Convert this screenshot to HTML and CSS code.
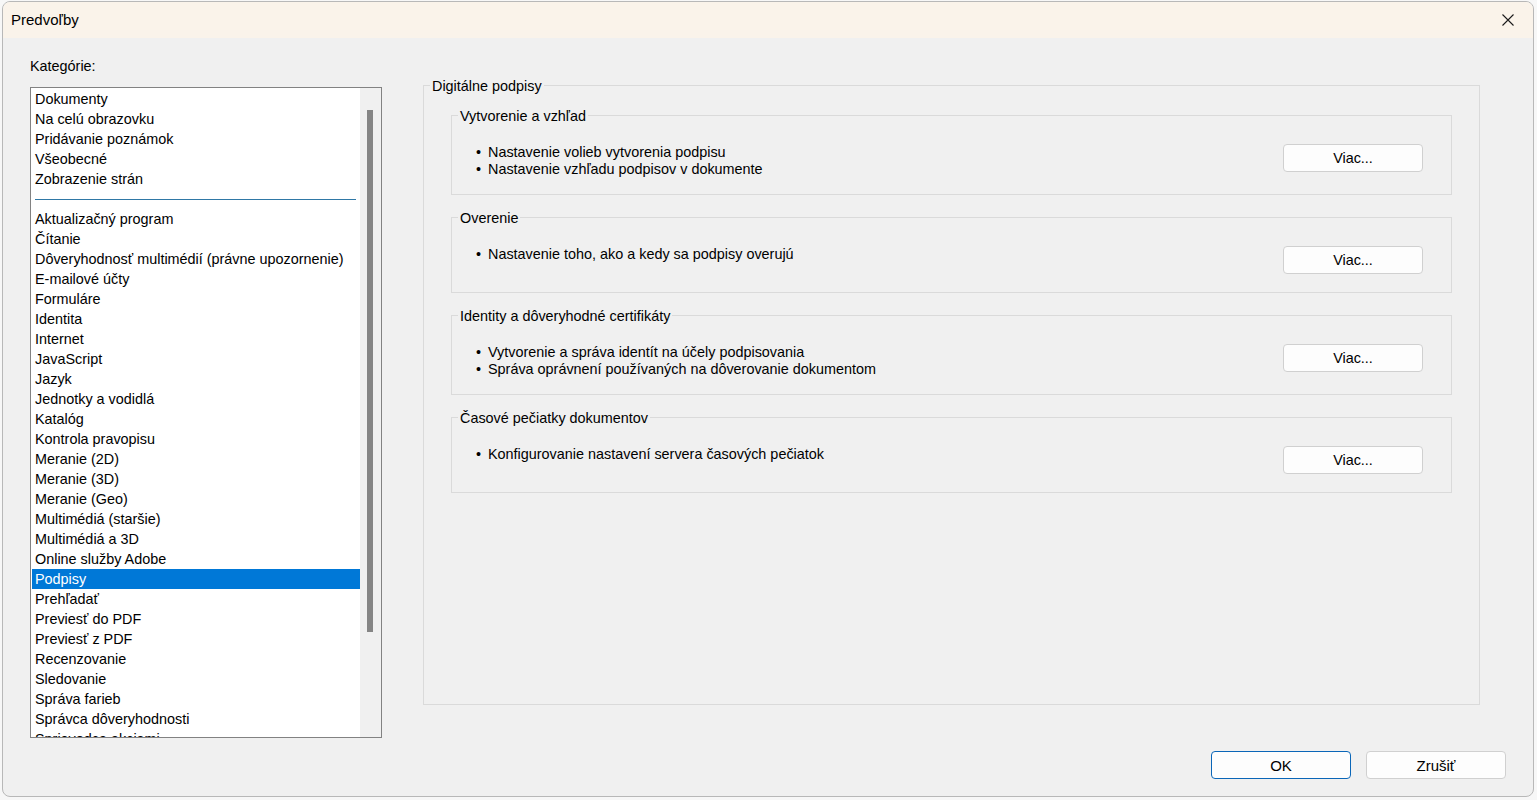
FILE: index.html
```html
<!DOCTYPE html>
<html lang="sk">
<head>
<meta charset="utf-8">
<title>Predvoľby</title>
<link rel="stylesheet" href="styles.css">
</head>
<body>
<div class="window">
  <div class="titlebar">
    <span class="title">Predvoľby</span>
    <span class="close">
      <svg width="12" height="12" viewBox="0 0 12 12"><path d="M0.5 0.5 L11.5 11.5 M11.5 0.5 L0.5 11.5" stroke="#1b1b1b" stroke-width="1.1" fill="none"/></svg>
    </span>
  </div>
  <div class="content">
    <div class="main">
      <div class="left">
        <div class="cat-label">Kategórie:</div>
        <div class="listbox">
          <div class="items">
            <div class="item">Dokumenty</div>
            <div class="item">Na celú obrazovku</div>
            <div class="item">Pridávanie poznámok</div>
            <div class="item">Všeobecné</div>
            <div class="item">Zobrazenie strán</div>
            <div class="sep"><div class="sep-line"></div></div>
            <div class="item">Aktualizačný program</div>
            <div class="item">Čítanie</div>
            <div class="item">Dôveryhodnosť multimédií (právne upozornenie)</div>
            <div class="item">E-mailové účty</div>
            <div class="item">Formuláre</div>
            <div class="item">Identita</div>
            <div class="item">Internet</div>
            <div class="item">JavaScript</div>
            <div class="item">Jazyk</div>
            <div class="item">Jednotky a vodidlá</div>
            <div class="item">Katalóg</div>
            <div class="item">Kontrola pravopisu</div>
            <div class="item">Meranie (2D)</div>
            <div class="item">Meranie (3D)</div>
            <div class="item">Meranie (Geo)</div>
            <div class="item">Multimédiá (staršie)</div>
            <div class="item">Multimédiá a 3D</div>
            <div class="item">Online služby Adobe</div>
            <div class="item selected">Podpisy</div>
            <div class="item">Prehľadať</div>
            <div class="item">Previesť do PDF</div>
            <div class="item">Previesť z PDF</div>
            <div class="item">Recenzovanie</div>
            <div class="item">Sledovanie</div>
            <div class="item">Správa farieb</div>
            <div class="item">Správca dôveryhodnosti</div>
            <div class="item">Sprievodca akciami</div>
          </div>
          <div class="scrolltrack"><div class="thumb"></div></div>
        </div>
      </div>
      <div class="right">
        <div class="panel">
          <div class="glabel">Digitálne podpisy</div>
          <div class="group">
            <div class="glabel">Vytvorenie a vzhľad</div>
            <div class="grow">
              <div class="bullets">
                <div><span class="dot">•</span>Nastavenie volieb vytvorenia podpisu</div>
                <div><span class="dot">•</span>Nastavenie vzhľadu podpisov v dokumente</div>
              </div>
              <button class="btn">Viac...</button>
            </div>
          </div>
          <div class="group">
            <div class="glabel">Overenie</div>
            <div class="grow">
              <div class="bullets">
                <div><span class="dot">•</span>Nastavenie toho, ako a kedy sa podpisy overujú</div>
              </div>
              <button class="btn">Viac...</button>
            </div>
          </div>
          <div class="group">
            <div class="glabel">Identity a dôveryhodné certifikáty</div>
            <div class="grow">
              <div class="bullets">
                <div><span class="dot">•</span>Vytvorenie a správa identít na účely podpisovania</div>
                <div><span class="dot">•</span>Správa oprávnení používaných na dôverovanie dokumentom</div>
              </div>
              <button class="btn">Viac...</button>
            </div>
          </div>
          <div class="group">
            <div class="glabel">Časové pečiatky dokumentov</div>
            <div class="grow">
              <div class="bullets">
                <div><span class="dot">•</span>Konfigurovanie nastavení servera časových pečiatok</div>
              </div>
              <button class="btn">Viac...</button>
            </div>
          </div>
        </div>
      </div>
    </div>
    <div class="footer">
      <button class="btn btn-lg btn-default">OK</button>
      <button class="btn btn-lg">Zrušiť</button>
    </div>
  </div>
</div>
</body>
</html>
```
FILE: styles.css
```css
html, body {
  margin: 0;
  padding: 0;
  background: #f7f7f7;
}
body {
  font-family: "Liberation Sans", Arial, sans-serif;
  font-size: 14.4px;
  color: #000;
}
.window {
  margin: 1px 2px 0 2px;
  width: 1532px;
  height: 796px;
  box-sizing: border-box;
  border: 1px solid #b8b8b8;
  border-radius: 8px;
  background: #f0f0f0;
  display: flex;
  flex-direction: column;
  overflow: hidden;
}
.titlebar {
  height: 36px;
  flex: 0 0 36px;
  background: #faf3ea;
  display: flex;
  align-items: center;
  justify-content: space-between;
  padding: 0 0 0 8px;
}
.title {
  font-size: 15px;
  line-height: 17px;
  margin-top: -1px;
}
.close {
  width: 46px;
  height: 36px;
  display: flex;
  align-items: center;
  justify-content: center;
  margin-right: 2px;
}
.content {
  flex: 1;
  display: flex;
  flex-direction: column;
  padding: 0 27px;
}
.main {
  display: flex;
  align-items: flex-start;
}
.left {
  width: 352px;
  flex: 0 0 352px;
  padding-top: 20px;
}
.cat-label {
  line-height: 17px;
  margin-bottom: 12px;
}
.listbox {
  height: 651px;
  box-sizing: border-box;
  border: 1px solid #828282;
  background: #fff;
  display: flex;
  overflow: hidden;
}
.items {
  flex: 1;
  overflow: hidden;
  padding-top: 1px;
}
.item {
  height: 20px;
  line-height: 20px;
  padding-left: 4px;
  white-space: nowrap;
}
.item.selected {
  background: #0078d7;
  color: #fff;
  margin-left: 1px;
  padding-left: 3px;
}
.sep {
  height: 20px;
  display: flex;
  align-items: center;
  padding: 0 4px 0 4px;
}
.sep-line {
  flex: 1;
  height: 1px;
  background: #2f78a6;
}
.scrolltrack {
  width: 21px;
  flex: 0 0 21px;
  background: #f0f0f0;
  padding-top: 22px;
  box-sizing: border-box;
}
.thumb {
  width: 6px;
  height: 522px;
  margin-left: 7px;
  background: #858585;
}
.right {
  flex: 1;
  margin-left: 41px;
  margin-right: 26px;
  padding-top: 47px;
}
.panel {
  position: relative;
  height: 620px;
  box-sizing: border-box;
  border: 1px solid #dadada;
  padding: 29px 27px 0 27px;
  display: flex;
  flex-direction: column;
  gap: 22px;
}
.group {
  position: relative;
  border: 1px solid #dadada;
}
.glabel {
  position: absolute;
  top: -8px;
  left: 6px;
  padding: 0 2px;
  line-height: 17px;
  background: #f0f0f0;
  white-space: nowrap;
}
.grow {
  display: flex;
  justify-content: space-between;
  align-items: flex-start;
  min-height: 30px;
  padding: 28px 28px 16px 24px;
}
.bullets {
  line-height: 17px;
}
.dot {
  display: inline-block;
  width: 12px;
}
.btn {
  width: 140px;
  height: 28px;
  box-sizing: border-box;
  background: #fdfdfd;
  border: 1px solid #d0d0d0;
  border-radius: 4px;
  font-family: "Liberation Sans", Arial, sans-serif;
  font-size: 14.4px;
  color: #000;
  padding: 0;
  flex: 0 0 auto;
}
.footer {
  margin-top: 13px;
  display: flex;
  justify-content: flex-end;
  gap: 15px;
}
.btn-lg {
  font-size: 15px;
}
.btn-default {
  border-color: #0a66b8;
}
```
